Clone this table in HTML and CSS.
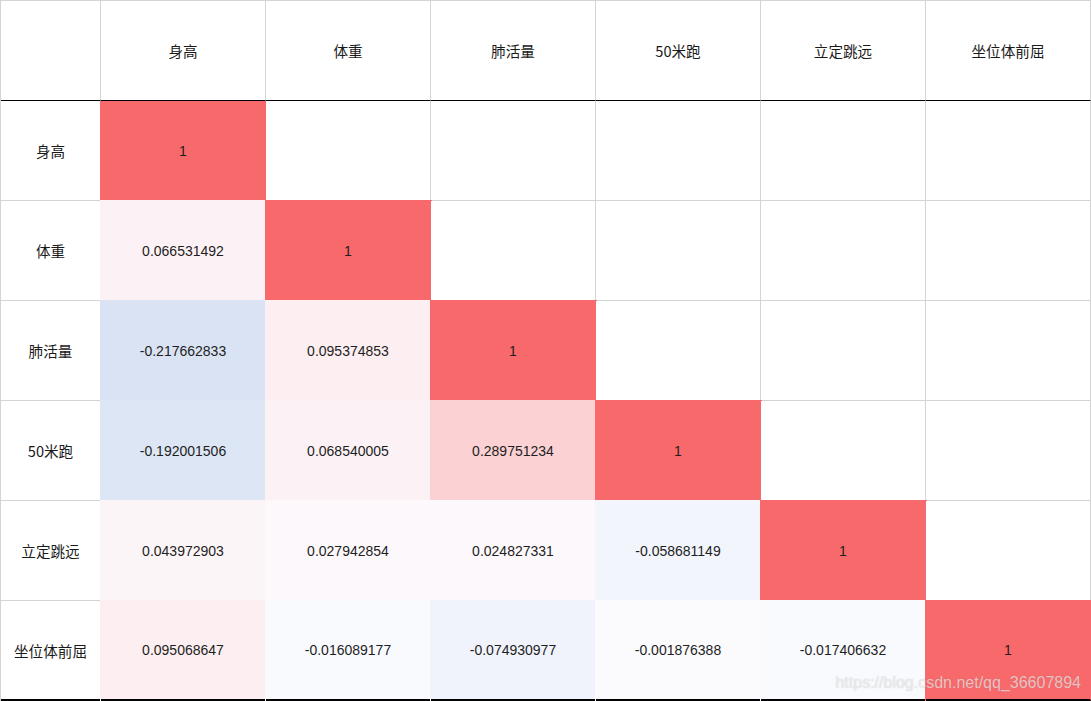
FILE: index.html
```html
<!DOCTYPE html>
<html lang="zh">
<head>
<meta charset="utf-8">
<title>相关系数</title>
<link rel="stylesheet" href="styles.css">
</head>
<body>
<div class="sheet">
  <div class="grid">
    <div class="cell head"></div>
    <div class="cell head zh">身高</div>
    <div class="cell head zh">体重</div>
    <div class="cell head zh">肺活量</div>
    <div class="cell head zh">50米跑</div>
    <div class="cell head zh">立定跳远</div>
    <div class="cell head zh">坐位体前屈</div>

    <div class="cell zh">身高</div>
    <div class="cell one first-row">1</div>
    <div class="cell"></div>
    <div class="cell"></div>
    <div class="cell"></div>
    <div class="cell"></div>
    <div class="cell"></div>

    <div class="cell zh">体重</div>
    <div class="cell fill c-p066">0.066531492</div>
    <div class="cell fill one">1</div>
    <div class="cell"></div>
    <div class="cell"></div>
    <div class="cell"></div>
    <div class="cell"></div>

    <div class="cell zh">肺活量</div>
    <div class="cell fill c-n217">-0.217662833</div>
    <div class="cell fill c-p095">0.095374853</div>
    <div class="cell fill one">1</div>
    <div class="cell"></div>
    <div class="cell"></div>
    <div class="cell"></div>

    <div class="cell zh">50米跑</div>
    <div class="cell fill c-n192">-0.192001506</div>
    <div class="cell fill c-p066">0.068540005</div>
    <div class="cell fill c-p289">0.289751234</div>
    <div class="cell fill one">1</div>
    <div class="cell"></div>
    <div class="cell"></div>

    <div class="cell zh">立定跳远</div>
    <div class="cell fill c-p044">0.043972903</div>
    <div class="cell fill c-p027">0.027942854</div>
    <div class="cell fill c-p027">0.024827331</div>
    <div class="cell fill c-n058">-0.058681149</div>
    <div class="cell fill one">1</div>
    <div class="cell"></div>

    <div class="cell zh last">坐位体前屈</div>
    <div class="cell fill last c-p095">0.095068647</div>
    <div class="cell fill last c-n016">-0.016089177</div>
    <div class="cell fill last c-n074">-0.074930977</div>
    <div class="cell fill last c-n001">-0.001876388</div>
    <div class="cell fill last c-n016">-0.017406632</div>
    <div class="cell fill last one">1</div>
  </div>
  <div class="watermark">https://blog.csdn.net/qq_36607894</div>
</div>
</body>
</html>
```

FILE: styles.css
```css
html, body {
  margin: 0;
  padding: 0;
  background: #ffffff;
}

.sheet {
  position: relative;
  width: 1091px;
  height: 701px;
  overflow: hidden;
}

.grid {
  display: grid;
  grid-template-columns: 100px repeat(6, 165px);
  grid-auto-rows: 100px;
  border-left: 1px solid #d4d4d4;
  border-top: 1px solid #d4d4d4;
  font-family: "Liberation Sans", "Noto Sans CJK SC", sans-serif;
  font-size: 14px;
  color: #1e1e1e;
}

.cell {
  --bg: #ffffff;
  box-sizing: border-box;
  display: flex;
  align-items: center;
  justify-content: center;
  border-right: 1px solid #d4d4d4;
  border-bottom: 1px solid #d4d4d4;
  background: var(--bg);
}

.zh {
  font-family: "Noto Sans CJK SC", sans-serif;
  font-size: 14.6px;
  color: #1a1a1a;
}

.head {
  border-bottom-color: #000000;
}

.last {
  border-bottom: 2px solid #000000;
}

.one    { --bg: #f8696b; }
.c-p066 { --bg: #fcf2f5; }
.c-p095 { --bg: #fceef1; }
.c-p289 { --bg: #fbd1d4; }
.c-p044 { --bg: #fcf5f8; }
.c-p027 { --bg: #fcf8fb; }
.c-n217 { --bg: #d9e3f3; }
.c-n192 { --bg: #dde6f4; }
.c-n058 { --bg: #f2f5fc; }
.c-n016 { --bg: #f9fafe; }
.c-n074 { --bg: #f0f3fb; }
.c-n001 { --bg: #fbfbfe; }

.fill, .first-row {
  border-right-color: var(--bg);
  border-bottom-color: var(--bg);
}

.fill.last {
  border-bottom-color: #000000;
}

.fill {
  box-shadow: 0 0 0 1px var(--bg);
}

.first-row {
  box-shadow: -1px 0 0 var(--bg);
}

.watermark {
  position: absolute;
  right: 10px;
  bottom: 9px;
  font-family: "Liberation Sans", sans-serif;
  font-size: 16px;
  color: rgba(255, 255, 255, 0.62);
  text-shadow: 0 0 1px rgba(90, 90, 90, 0.35);
  white-space: nowrap;
}
```
